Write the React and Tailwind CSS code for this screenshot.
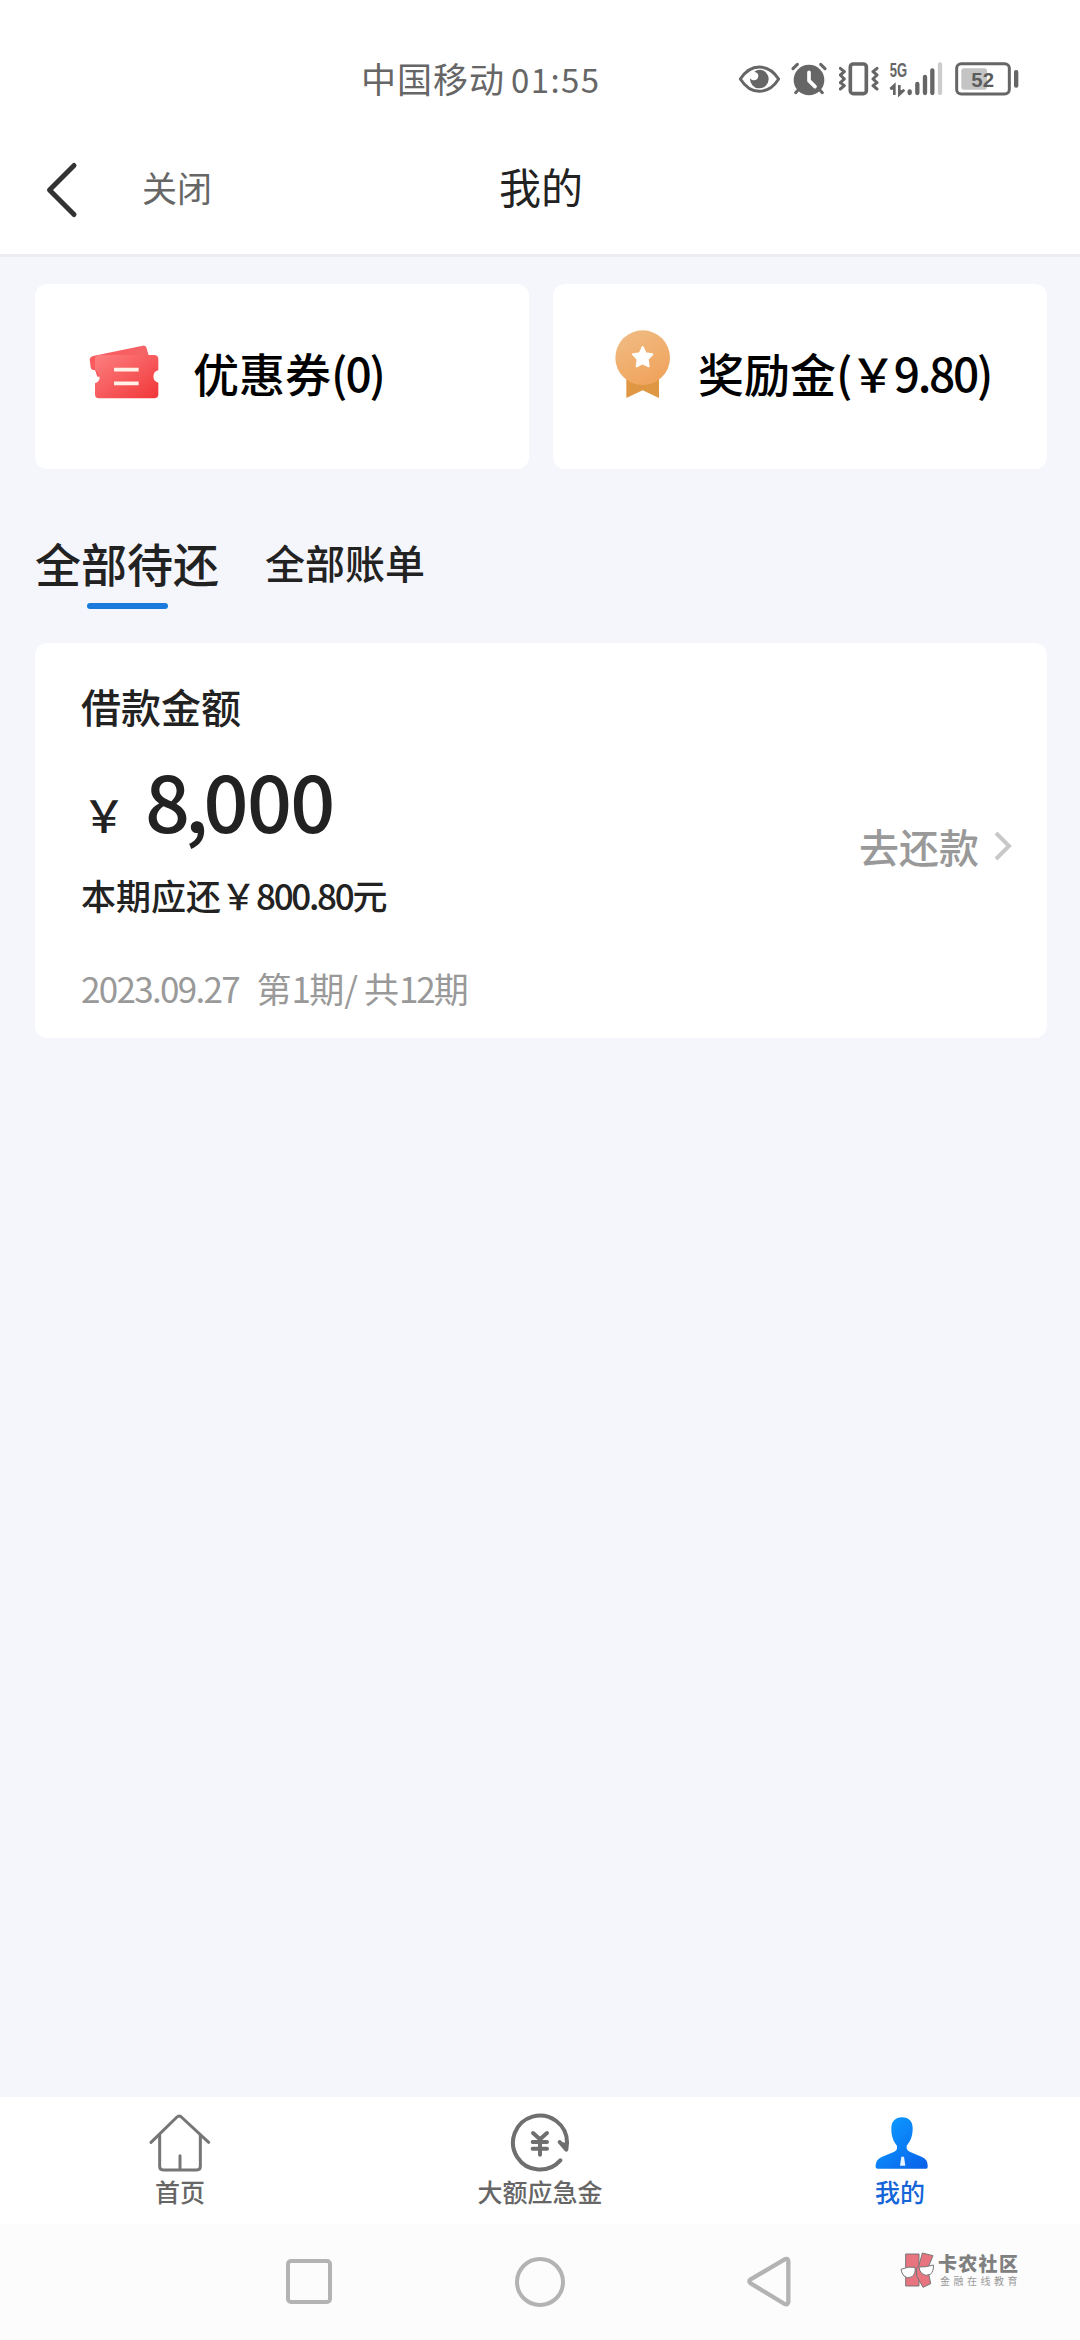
import React from "react";

const INK = "#666666";

function EyeIcon() {
  return (
    <svg width="42" height="30" viewBox="54 73 126 90" className="shrink-0">
      <path d="M61 118C78 92 97 82 118 82S159 92 176 118C159 145 140 155 118 155S78 145 61 118Z" fill="none" stroke={INK} strokeWidth="9" strokeLinejoin="round" />
      <path d="M119 90A28 28 0 1 1 90 116C99 127 115 122 115 108Q115 99 103 96Q110 90 119 90Z" fill={INK} />
    </svg>
  );
}

function AlarmIcon() {
  return (
    <svg width="36" height="34" viewBox="214 68 108 102" className="shrink-0">
      <circle cx="268" cy="122" r="46" fill={INK} />
      <path d="M268 99V124L286 142" fill="none" stroke="#fff" strokeWidth="11" strokeLinecap="round" strokeLinejoin="round" />
      <path d="M220 88L233 75M316 88L303 75M228 160L238 149M308 160L298 149" stroke={INK} strokeWidth="9" strokeLinecap="round" />
    </svg>
  );
}

function VibrateIcon() {
  return (
    <svg width="40" height="34" viewBox="357 68 120 102" className="shrink-0">
      <rect x="391" y="74" width="48" height="89" rx="9" fill="none" stroke={INK} strokeWidth="11" />
      <path d="M361 87L373 97L361 107L373 119L361 130L373 139L361 149M471 87L459 97L471 107L459 119L471 130L459 139L471 149" fill="none" stroke={INK} strokeWidth="9" strokeLinecap="round" strokeLinejoin="round" />
    </svg>
  );
}

function SignalIcon() {
  return (
    <svg width="54" height="36" viewBox="509 62 162 108" className="shrink-0 overflow-visible">
      <text x="511" y="111" fontSize="60" fontWeight="700" fontFamily="Liberation Sans, sans-serif" fill={INK} textLength="52" lengthAdjust="spacingAndGlyphs">5G</text>
      <path d="M513 146L525 135V164M540 134V162L555 148" fill="none" stroke={INK} strokeWidth="8" />
      <path d="M512 148L525 134V148ZM540 162V149H556Z" fill={INK} />
      <g stroke={INK} strokeWidth="13" strokeLinecap="round">
        <path d="M571 153V158M594 131V158M617 110V158M639 90V158" />
        <path d="M662 72V158" stroke="#cccccc" />
      </g>
    </svg>
  );
}

function BatteryIcon() {
  return (
    <svg width="64" height="34" viewBox="707 68 192 102" className="shrink-0">
      <rect x="712" y="73" width="158" height="91" rx="14" fill="none" stroke={INK} strokeWidth="9" />
      <rect x="726" y="87" width="77" height="64" rx="8" fill="#c4c4c4" />
      <rect x="884" y="92" width="13" height="53" rx="6" fill={INK} />
      <text x="756" y="142" fontSize="62" fontWeight="700" fontFamily="Liberation Sans, sans-serif" fill="#5c5c5c" textLength="68" lengthAdjust="spacingAndGlyphs">52</text>
    </svg>
  );
}

function StatusBar() {
  return (
    <div className="flex h-[124px] items-start pl-[361px] text-[#666666]">
      <span className="mt-[53px] w-[150px] whitespace-nowrap text-[35px] leading-[50px] tracking-[1px]">中国移动</span>
      <span className="mt-[56px] w-[227px] whitespace-nowrap text-[33px] leading-[46px] tracking-[1.4px]">01:55</span>
      <div className="mt-[62px] flex items-start">
        <div className="mt-[2px] flex"><EyeIcon /></div>
        <div className="ml-[11px] flex"><AlarmIcon /></div>
        <div className="ml-[12px] flex"><VibrateIcon /></div>
        <div className="-mt-[1px] ml-[10px] flex"><SignalIcon /></div>
        <div className="ml-[12px] flex"><BatteryIcon /></div>
      </div>
    </div>
  );
}

function Header() {
  return (
    <header className="flex h-[133px] items-start border-b-[3px] border-[#ececf1] pl-[44px]">
      <svg width="36" height="58" viewBox="0 0 36 58" className="mt-[37px] shrink-0">
        <path d="M30 4.500L5.500 29L30 53.500" fill="none" stroke="#333333" strokeWidth="5" strokeLinecap="round" strokeLinejoin="round" />
      </svg>
      <span className="mt-[38px] ml-[62px] w-[357px] text-[35px] leading-[50px] text-[#666666]">关闭</span>
      <span className="mt-[33px] text-[42px] leading-[58px] text-[#222222]">我的</span>
    </header>
  );
}

function CouponIcon() {
  return (
    <svg width="72" height="58" viewBox="207 222 216 174" className="shrink-0">
      <defs>
        <linearGradient id="couponFront" x1="0" y1="0" x2="1" y2="1">
          <stop offset="0" stopColor="#fd7f81" />
          <stop offset="1" stopColor="#f13638" />
        </linearGradient>
        <linearGradient id="couponBack" x1="0" y1="0" x2="1" y2="0">
          <stop offset="0" stopColor="#fb5a5e" />
          <stop offset="1" stopColor="#f46466" />
        </linearGradient>
      </defs>
      <path d="M219 258L368 227Q376 226 379 232L386 256V320H232L225 300H219Q213 300 212 292L209 268Q210 260 219 258Z" fill="url(#couponBack)" />
      <path d="M236 255H402Q415 255 415 268V301A19 19 0 0 0 415 338V373Q415 385 402 385H237Q225 385 225 373V340Q239 335 239 321Q239 307 225 301V268Q225 255 236 255Z" fill="url(#couponFront)" />
      <path d="M282 299H356M282 340H356" stroke="#fff1e8" strokeWidth="11" />
    </svg>
  );
}

function MedalIcon() {
  return (
    <svg width="56" height="70" viewBox="225 176 168 210" className="shrink-0">
      <defs>
        <linearGradient id="medalFace" x1="0.2" y1="0" x2="0.7" y2="1">
          <stop offset="0" stopColor="#f0bb82" />
          <stop offset="1" stopColor="#f0a35c" />
        </linearGradient>
      </defs>
      <path d="M259 310H357V383L308 360L259 383Z" fill="#df9743" />
      <circle cx="308" cy="262" r="82" fill="url(#medalFace)" />
      <path d="M308 230L317 249L337 252L323 267L326 288L308 279L290 288L293 267L279 252L299 249Z" fill="#fff" stroke="#fff" strokeWidth="6" strokeLinejoin="round" />
    </svg>
  );
}

function HomeIcon() {
  return (
    <svg width="62" height="60" viewBox="149 97 186 180">
      <g fill="none" stroke="#767676" strokeWidth="9" strokeLinecap="round" strokeLinejoin="round">
        <path d="M155 185L233 109Q239 103 246 109L328 185" />
        <path d="M181 163V257Q181 268 192 268H292Q303 268 303 257V163M242 225V266" />
      </g>
    </svg>
  );
}

function CashIcon() {
  return (
    <svg width="60" height="60" viewBox="213 97 180 180">
      <g fill="none" stroke="#6f6f6f" strokeWidth="12" strokeLinecap="round" strokeLinejoin="round">
        <path d="M364 239A81 81 0 1 1 384 186" />
        <path d="M384 186L382 207L362 184Z" fill="#6f6f6f" strokeWidth="0" />
        <path d="M384 186L382 207L362 184" strokeWidth="12" />
        <path d="M282 157L303 176L324 157M281 184H324M281 204H324M303 178V222" />
      </g>
    </svg>
  );
}

function PersonIcon() {
  return (
    <svg width="54" height="54" viewBox="404 107 162 162">
      <defs>
        <linearGradient id="personFill" x1="0" y1="0" x2="1" y2="1">
          <stop offset="0.2" stopColor="#0c95ff" />
          <stop offset="1" stopColor="#0a5fe8" />
        </linearGradient>
      </defs>
      <path d="M485 111C506 111 517 123 517 144C517 169 510 184 499 196V204Q500 211 508 214L545 230Q562 238 562 254V260Q562 265 557 265H412Q406 265 406 260V254Q407 238 424 230L462 214Q470 211 470 204V196C459 184 453 169 453 144C453 123 465 111 485 111Z" fill="url(#personFill)" />
      <path d="M483 229H491L495 256H479Z" fill="#e8f4ff" />
    </svg>
  );
}

function TabItem({ icon, label, active }) {
  return (
    <div className="flex flex-1 flex-col items-center">
      <div className="flex h-[77px] items-end pb-[1px]">{icon}</div>
      <span className={active ? "text-[25px] leading-[34px] font-medium text-[#1565d8]" : "text-[25px] leading-[34px] font-medium text-[#666666]"}>{label}</span>
    </div>
  );
}

function CommunityLogo() {
  return (
    <svg width="34" height="36" viewBox="480 516 102 108" className="shrink-0">
      <g fill="#e8747f" stroke="#777" strokeWidth="3" strokeLinejoin="round">
        <path d="M497 522H537V618H497Z" />
        <path d="M547 519L579 527L563 566L572 611L549 622L530 588L529 566L537 556Z" />
      </g>
      <g fill="#fff" stroke="#777" strokeWidth="3">
        <path d="M483 568Q505 558 525 562Q528 580 516 590Q503 598 492 588Q485 580 483 568Z" />
        <path d="M537 561Q557 562 580 555Q582 574 571 583Q557 590 546 581Q538 573 537 561Z" />
      </g>
    </svg>
  );
}

export default function App() {
  return (
    <div className="flex h-[2340px] w-[1080px] flex-col overflow-hidden bg-[#f5f6fb] font-['Noto_Sans_CJK_SC',sans-serif]">
      <div className="bg-white">
        <StatusBar />
        <Header />
      </div>

      <main className="flex flex-1 flex-col pt-[27px] pr-[33px] pl-[35px]">
        <div className="grid h-[185px] shrink-0 grid-cols-2 gap-6">
          <div className="flex items-start rounded-[12px] bg-white pl-[54px]">
            <div className="mt-[60px] flex"><CouponIcon /></div>
            <span className="mt-[55px] ml-[32px] whitespace-nowrap text-[46px] leading-[66px] font-medium text-black">
              优惠券<span className="tracking-[-2px]">(0)</span>
            </span>
          </div>
          <div className="flex items-start rounded-[12px] bg-white pl-[62px]">
            <div className="mt-[45px] flex"><MedalIcon /></div>
            <span className="mt-[55px] ml-[27px] whitespace-nowrap text-[46px] leading-[66px] font-medium text-black">
              奖励金<span className="tracking-[-2.3px]">(￥9.80)</span>
            </span>
          </div>
        </div>

        <div className="flex h-[174px] shrink-0 items-start pt-[60px] text-[#222222]">
          <div className="flex w-[184px] flex-col items-center">
            <span className="text-[46px] leading-[66px] font-medium whitespace-nowrap">全部待还</span>
            <div className="mt-[8px] h-[6px] w-[81px] rounded-full bg-[#1a7bdc]" />
          </div>
          <span className="mt-[4px] ml-[46px] text-[40px] leading-[58px] font-medium">全部账单</span>
        </div>

        <section className="flex h-[395px] shrink-0 items-start justify-between rounded-[12px] bg-white pr-[34px] pl-[46px] text-[#222222]">
          <div className="flex flex-col whitespace-nowrap">
            <span className="mt-[34px] text-[40px] leading-[58px] font-medium">借款金额</span>
            <div className="mt-[14px] flex items-baseline leading-[100px]">
              <span className="w-[64px] pl-[1px] text-[44px] font-medium">￥</span>
              <span className="text-[79px] font-medium tracking-[-1.7px]">
                <span className="tracking-[-5px]">8,</span>000
              </span>
            </div>
            <span className="mt-[6px] text-[35px] leading-[50px] font-medium">
              本期应还￥<span className="tracking-[-2.3px]">800.80</span>元
            </span>
            <span className="mt-[43px] text-[35px] leading-[50px] whitespace-pre text-[#999999]">
              <span className="tracking-[-1.7px]">2023.09.27</span>
              <span className="tracking-[1px]">{"  "}</span>第<span className="tracking-[-1.7px]">1</span>期<span className="tracking-[-1px]">/ </span>共<span className="tracking-[-2px]">12</span>期
            </span>
          </div>
          <div className="mt-[174px] flex items-center text-[#999999]">
            <span className="text-[40px] leading-[58px] font-medium">去还款</span>
            <svg width="20" height="32" viewBox="0 0 20 32" className="ml-[14px]">
              <path d="M3 3L16 16L3 29" fill="none" stroke="#c8c8c8" strokeWidth="4" />
            </svg>
          </div>
        </section>
      </main>

      <nav className="flex h-[127px] shrink-0 bg-white">
        <TabItem icon={<HomeIcon />} label="首页" />
        <TabItem icon={<CashIcon />} label="大额应急金" />
        <TabItem icon={<div className="pb-[3px] pl-[3px]"><PersonIcon /></div>} label="我的" active />
      </nav>

      <div className="flex h-[116px] shrink-0 items-start bg-[#fcfcfc] pl-[286px]">
        <div className="mt-[35px] h-[45px] w-[46px] rounded-[5px] border-4 border-[#b3b3b3]" />
        <div className="mt-[33px] ml-[183px] h-[50px] w-[50px] rounded-full border-4 border-[#b3b3b3]" />
        <svg width="46" height="52" viewBox="20 529 138 156" className="mt-[32px] ml-[182px] shrink-0">
          <path d="M31 599L133 539Q143 535 144 544V667Q143 676 133 673L31 611Q23 605 31 599Z" fill="none" stroke="#b3b3b3" strokeWidth="13" strokeLinejoin="round" />
        </svg>
        <div className="mt-[28px] ml-[107px] flex"><CommunityLogo /></div>
        <div className="mt-[27px] ml-[4px] flex flex-col whitespace-nowrap">
          <span className="text-[19px] leading-[24px] font-black tracking-[1.3px] text-[#808080]">卡农社区</span>
          <span className="ml-[2px] text-[10px] leading-[12px] tracking-[3.5px] text-[#999999]">金融在线教育</span>
        </div>
      </div>
    </div>
  );
}
